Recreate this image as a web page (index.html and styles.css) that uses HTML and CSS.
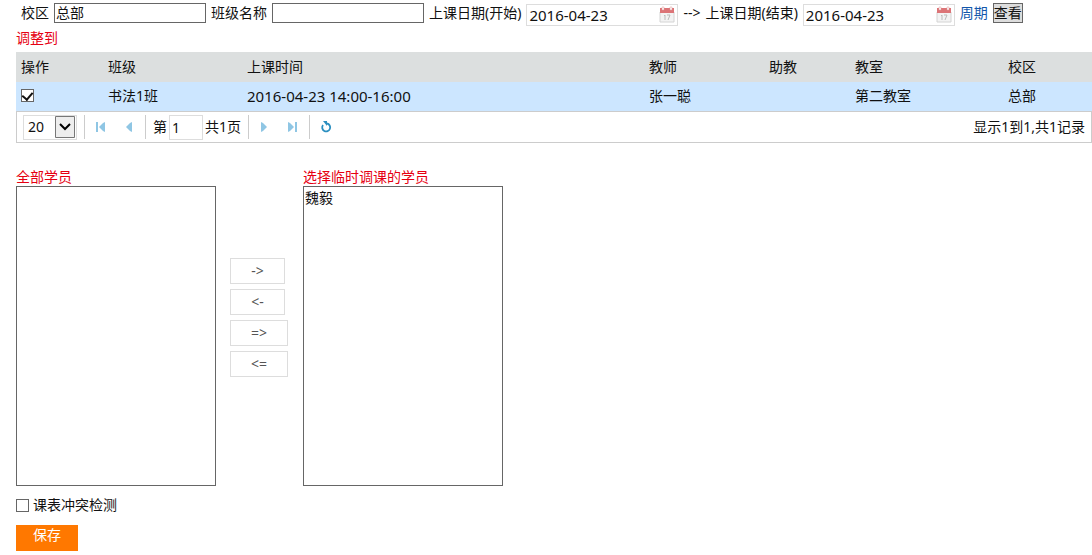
FILE: index.html
```html
<!DOCTYPE html>
<html lang="zh-CN">
<head>
    <meta charset="UTF-8">
    <meta name="viewport" content="width=device-width, initial-scale=1.0">
    <title>临时调课</title>
    <link rel="stylesheet" href="styles.css">
</head>
<body>

    <!-- Search bar -->
    <form class="search-bar">
        <label for="school">校区</label>
        <input type="text" class="text-input" id="school" value="总部">
        <label for="className">班级名称</label>
        <input type="text" class="text-input" id="className">
        <label for="startDate">上课日期(开始)</label>
        <span class="date-box">
            <input type="text" id="startDate" value="2016-04-23">
            <svg width="16" height="18" viewBox="0 0 16 18">
                <path d="M1 6h14v10H1z" fill="#f3f3f3" stroke="#d4d4d4"/>
                <path d="M1 2h14v5H1z" fill="#dc7477"/>
                <path d="M3 1h2v3H3zM11 1h2v3h-2z" fill="#fff" stroke="#d99" stroke-width=".5"/>
                <path d="M5 10l1-1v5M8 9h3l-2 5" fill="none" stroke="#bbb"/>
            </svg>
        </span>
        <span>--&gt;</span>
        <label for="endDate">上课日期(结束)</label>
        <span class="date-box">
            <input type="text" id="endDate" value="2016-04-23">
            <svg width="16" height="18" viewBox="0 0 16 18">
                <path d="M1 6h14v10H1z" fill="#f3f3f3" stroke="#d4d4d4"/>
                <path d="M1 2h14v5H1z" fill="#dc7477"/>
                <path d="M3 1h2v3H3zM11 1h2v3h-2z" fill="#fff" stroke="#d99" stroke-width=".5"/>
                <path d="M5 10l1-1v5M8 9h3l-2 5" fill="none" stroke="#bbb"/>
            </svg>
        </span>
        <a href="#">周期</a>
        <button type="button" class="view-btn">查看</button>
    </form>

    <div class="red-title">调整到</div>

    <!-- Class table -->
    <table class="class-table">
        <colgroup>
            <col class="col-check">
            <col class="col-class">
            <col>
            <col class="col-teacher">
            <col class="col-assistant">
            <col class="col-room">
            <col class="col-school">
        </colgroup>
        <thead>
            <tr>
                <th>操作</th>
                <th>班级</th>
                <th>上课时间</th>
                <th>教师</th>
                <th>助教</th>
                <th>教室</th>
                <th>校区</th>
            </tr>
        </thead>
        <tbody>
            <tr>
                <td><input type="checkbox" aria-label="书法1班" checked></td>
                <td>书法1班</td>
                <td class="time">2016-04-23 14:00-16:00</td>
                <td>张一聪</td>
                <td></td>
                <td>第二教室</td>
                <td>总部</td>
            </tr>
        </tbody>
    </table>

    <!-- Pager -->
    <div class="pager">
        <span class="page-size">
            <select aria-label="每页">
                <option>20</option>
                <option>50</option>
            </select>
            <svg width="20" height="22" viewBox="0 0 20 22">
                <path d="M.5.5h19v21H.5z" fill="#eee" stroke="#777"/>
                <path d="M5 8l5 5 5-5" fill="none" stroke="#000" stroke-width="2"/>
            </svg>
        </span>
        <span class="line"></span>
        <button type="button" class="icon-btn" aria-label="首页">
            <svg width="12" height="12" viewBox="0 0 12 12" fill="#8fc6e4"><path d="M1 1h2v10H1zM10 1v10L8 10 4 6l4-4z"/></svg>
        </button>
        <button type="button" class="icon-btn" aria-label="上一页">
            <svg width="12" height="12" viewBox="0 0 12 12" fill="#8fc6e4"><path d="M9 1v10L7 10 3 6l4-4z"/></svg>
        </button>
        <span class="line"></span>
        <label for="page" class="page-label">第</label>
        <input type="text" class="page-input" id="page" value="1">
        <span class="page-total">共1页</span>
        <span class="line"></span>
        <button type="button" class="icon-btn" aria-label="下一页">
            <svg width="12" height="12" viewBox="0 0 12 12" fill="#8fc6e4"><path d="M2 1v10l2-1 4-4-4-4z"/></svg>
        </button>
        <button type="button" class="icon-btn" aria-label="末页">
            <svg width="12" height="12" viewBox="0 0 12 12" fill="#8fc6e4"><path d="M8 1h2v10H8zM1 1v10l2-1 4-4-4-4z"/></svg>
        </button>
        <span class="line"></span>
        <button type="button" class="icon-btn" aria-label="刷新">
            <svg width="12" height="12" viewBox="0 0 12 12"><path d="M7 2.5a4 4 0 1 1-4 1.5" fill="none" stroke="#2b8fc0" stroke-width="1.8"/><path d="M3 0h4v5z" fill="#2b8fc0"/></svg>
        </button>
        <span class="page-info">显示1到1,共1记录</span>
    </div>

    <!-- Students -->
    <div class="students">
        <div class="student-list">
            <label for="allStudents" class="red-label">全部学员</label>
            <select id="allStudents" multiple></select>
        </div>
        <div class="move-btns">
            <button type="button">-&gt;</button>
            <button type="button">&lt;-</button>
            <button type="button">=&gt;</button>
            <button type="button">&lt;=</button>
        </div>
        <div class="student-list">
            <label for="pickedStudents" class="red-label">选择临时调课的学员</label>
            <select id="pickedStudents" multiple>
                <option>魏毅</option>
            </select>
        </div>
    </div>

    <div class="check-row">
        <input type="checkbox" id="conflict">
        <label for="conflict">课表冲突检测</label>
    </div>

    <button type="button" class="save-btn">保存</button>

</body>
</html>
```
FILE: styles.css
```css
* {
    box-sizing: border-box;
}

body {
    margin: 0;
    padding: 3px 0 0 16px;
    background: #fff;
    color: #111;
    font-family: "Noto Sans", "Noto Sans CJK SC", sans-serif;
    font-size: 14px;
    line-height: 20px;
}

input, select, button {
    font: inherit;
    color: inherit;
    border-radius: 0;
}

a {
    color: #1257ab;
    text-decoration: none;
}

input[type="checkbox"] {
    appearance: none;
    width: 13px;
    height: 13px;
    margin: 0;
    border: 1px solid #666;
    background: #fff;
}

input[type="checkbox"]:checked::after {
    content: "";
    display: block;
    width: 5px;
    height: 8px;
    margin: 0 auto;
    border: solid #111;
    border-width: 0 2px 2px 0;
    transform: rotate(40deg);
}

/* Search bar */
.search-bar {
    display: flex;
    align-items: flex-start;
    gap: 5px;
    height: 24px;
    padding-left: 5px;
    white-space: nowrap;
}

.text-input {
    width: 152px;
    height: 20px;
    padding: 0 1px;
    border: 1px solid #666;
}

.date-box {
    display: flex;
    align-items: center;
    width: 152px;
    height: 22px;
    margin-top: 1px;
    padding: 0 2px;
    border: 1px solid #ddd;
}

.date-box input {
    flex: 1;
    min-width: 0;
    height: 20px;
    padding: 0;
    border: 0;
    font-size: 15px;
}

.view-btn {
    height: 20px;
    padding: 0;
    border: 1px solid #666;
    background: #ddd;
    line-height: 18px;
}

.red-title {
    height: 25px;
    line-height: 22px;
    color: #e60012;
}

/* Class table */
.class-table {
    width: 100%;
    table-layout: fixed;
    border-collapse: collapse;
}

.class-table th,
.class-table td {
    height: 29px;
    padding: 0 5px;
    text-align: left;
    font-weight: normal;
}

.class-table th {
    height: 30px;
    background: #dcdfdf;
}

.class-table td {
    padding-bottom: 2px;
    background: #cce6ff;
}

.class-table td input {
    display: block;
}

.class-table .time {
    font-size: 15px;
}

.col-check { width: 87px; }
.col-class { width: 139px; }
.col-teacher { width: 120px; }
.col-assistant { width: 86px; }
.col-room { width: 153px; }
.col-school { width: 89px; }

/* Pager */
.pager {
    display: flex;
    align-items: center;
    height: 32px;
    padding: 0 6px;
    border: 1px solid #ccc;
}

.page-size {
    display: flex;
    align-items: center;
    width: 54px;
    height: 25px;
    border: 1px solid #ddd;
}

.page-size select {
    appearance: none;
    width: 31px;
    padding: 0 0 0 4px;
    border: 0;
    background: #fff;
}

.line {
    width: 1px;
    height: 24px;
    margin: 0 7px;
    background: #ccc;
}

.icon-btn {
    display: flex;
    align-items: center;
    justify-content: center;
    width: 18px;
    height: 24px;
    padding: 0;
    border: 0;
    background: none;
}

.icon-btn + .icon-btn {
    margin-left: 10px;
}

.page-label {
    margin-right: 2px;
}

.page-input {
    width: 34px;
    height: 25px;
    padding: 0 2px;
    border: 1px solid #ddd;
}

.page-total {
    margin-left: 2px;
}

.page-info {
    margin-left: auto;
}

/* Students */
.students {
    display: flex;
    gap: 14px;
    margin-top: 24px;
}

.student-list {
    width: 200px;
}

.red-label {
    display: block;
    height: 19px;
    color: #e60012;
}

.student-list select {
    display: block;
    width: 200px;
    height: 300px;
    padding: 0;
    border: 1px solid #666;
    outline: 0;
}

.student-list option {
    padding: 0 1px;
    line-height: 20px;
}

.move-btns {
    display: flex;
    flex-direction: column;
    align-items: flex-start;
    gap: 5px;
    width: 59px;
    padding-top: 91px;
}

.move-btns button {
    min-width: 55px;
    height: 26px;
    padding: 0 20px;
    border: 1px solid #ddd;
    background: #fff;
    color: #555;
    line-height: 24px;
}

.check-row {
    display: flex;
    align-items: center;
    gap: 4px;
    margin-top: 9px;
}

.save-btn {
    display: block;
    width: 62px;
    height: 26px;
    margin: 10px 0 4px;
    padding: 0 0 6px;
    border: 0;
    background: #ff7800;
    color: #fff;
}
```
